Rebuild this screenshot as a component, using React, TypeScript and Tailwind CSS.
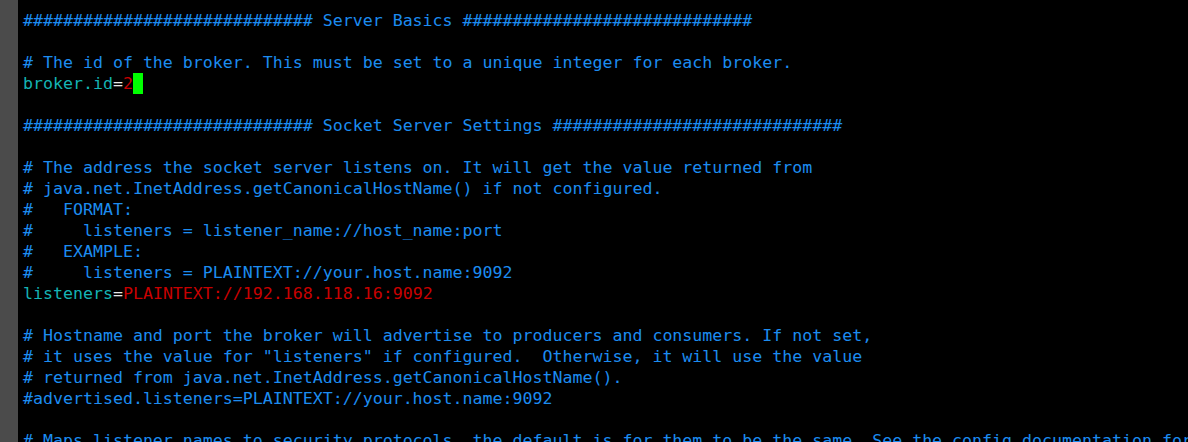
const blue = "text-[#1c8cf0]";

type Seg = { t: string; c: string };

const lines: Seg[][] = [
  [{ t: "############################# Server Basics #############################", c: blue }],
  [],
  [{ t: "# The id of the broker. This must be set to a unique integer for each broker.", c: blue }],
  [],
  [],
  [{ t: "############################# Socket Server Settings #############################", c: blue }],
  [],
  [{ t: "# The address the socket server listens on. It will get the value returned from", c: blue }],
  [{ t: "# java.net.InetAddress.getCanonicalHostName() if not configured.", c: blue }],
  [{ t: "#   FORMAT:", c: blue }],
  [{ t: "#     listeners = listener_name://host_name:port", c: blue }],
  [{ t: "#   EXAMPLE:", c: blue }],
  [{ t: "#     listeners = PLAINTEXT://your.host.name:9092", c: blue }],
  [
    { t: "listeners", c: "text-[#14b4b4]" },
    { t: "=", c: "text-[#e8e8e8]" },
    { t: "PLAINTEXT://192.168.118.16:9092", c: "text-[#c80000]" },
  ],
  [],
  [{ t: "# Hostname and port the broker will advertise to producers and consumers. If not set,", c: blue }],
  [{ t: '# it uses the value for "listeners" if configured.  Otherwise, it will use the value', c: blue }],
  [{ t: "# returned from java.net.InetAddress.getCanonicalHostName().", c: blue }],
  [{ t: "#advertised.listeners=PLAINTEXT://your.host.name:9092", c: blue }],
  [],
  [{ t: "# Maps listener names to security protocols, the default is for them to be the same. See the config documentation for more details", c: blue }],
];

export default function App() {
  return (
    <div className="flex h-[442px] w-[1188px] overflow-hidden bg-black">
      {/* left gutter */}
      <div className="w-[18px] shrink-0 bg-[#4b4b4b]" />

      <div className="flex-1 overflow-hidden pl-[5px] pt-[10px] font-['DejaVu_Sans_Mono',monospace] text-[16.6px] leading-[21px]">
        {lines.map((segs, i) => (
          <div key={i} className="h-[21px] whitespace-pre">
            {i === 3 ? (
              <>
                <span className="text-[#14b4b4]">broker.id</span>
                <span className="text-[#e8e8e8]">=</span>
                <span className="text-[#c80000]">2</span>
                <span className="inline-block h-[21px] w-[10px] bg-[#00ff00] align-top" />
              </>
            ) : (
              segs.map((s, j) => (
                <span key={j} className={s.c}>
                  {s.t}
                </span>
              ))
            )}
          </div>
        ))}
      </div>
    </div>
  );
}
